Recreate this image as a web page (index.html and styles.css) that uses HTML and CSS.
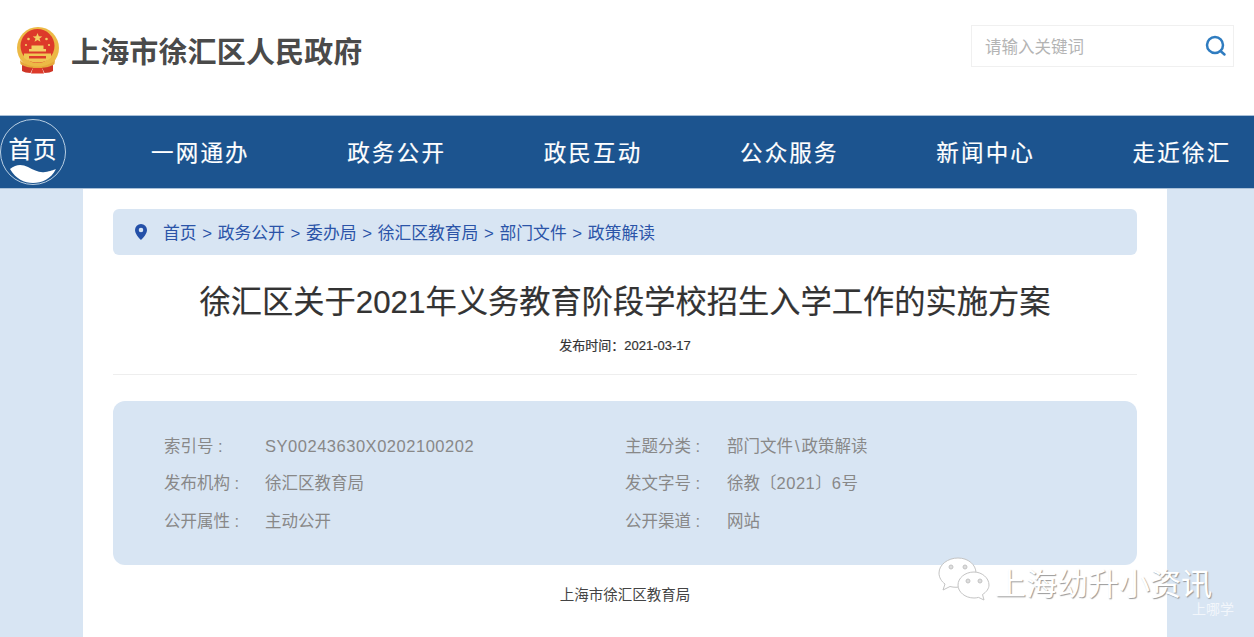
FILE: index.html
```html
<!DOCTYPE html>
<html lang="zh-CN">
<head>
  <meta charset="UTF-8" />
  <meta name="viewport" content="width=device-width, initial-scale=1" />
  <title>上海市徐汇区人民政府</title>
  <link rel="stylesheet" href="styles.css">
</head>
<body>

  <header class="top">
    <div class="brand">
      <svg class="emblem" width="44" height="47" viewBox="0 0 44 47">
        <circle cx="22" cy="21" r="21" fill="#ecb945"/>
        <circle cx="21.500" cy="19" r="17" fill="#dd3a2a"/>
        <path d="M21.500 6l1.300 3.300 3.500.1-2.800 2.100 1 3.300-3-1.900-3 1.900 1-3.300-2.800-2.100 3.500-.1z" fill="#f3cf62"/>
        <circle cx="12.500" cy="12" r="1.300" fill="#f3cf62"/><circle cx="30.500" cy="12" r="1.300" fill="#f3cf62"/>
        <circle cx="10" cy="18" r="1.100" fill="#f3cf62"/><circle cx="33" cy="18" r="1.100" fill="#f3cf62"/>
        <path d="M13 24.500h17v-2.500h-2.500v-3.500h-12V22H13z" fill="#f3cf62"/>
        <path d="M8 26.500h27v4c-3 3.500-8 5-13.500 5S11 34 8 30.500z" fill="#f0c653"/>
        <path d="M13 29h17v2.500H13z" fill="#dd3a2a"/>
        <path d="M4 33c4 4 10 6.500 17.500 6.500S35 37 39 33l-.5 4c-4 3.500-10 5-17 5s-13-1.500-17-5z" fill="#e6a93a"/>
        <path d="M6 38c3 1.600 7 2.500 11 2.800L14.500 46C11 46 8 45.300 6 44zM37 38c-3 1.600-7 2.500-11 2.800l2.500 5.200c3.500 0 6.500-.7 8.500-2z" fill="#cf3527"/>
        <path d="M17 41h9l2 5.500H15z" fill="#dd3a2a"/>
      </svg>
      <span class="site-name">上海市徐汇区人民政府</span>
    </div>
    <div class="search">
      <span class="search-hint">请输入关键词</span>
      <svg width="22" height="22" viewBox="0 0 22 22" fill="none" stroke="#2f7cc0" stroke-width="2.500" stroke-linecap="round">
        <circle cx="10" cy="10" r="8"/>
        <path d="M15.500 16l4 3.500"/>
      </svg>
    </div>
  </header>

  <nav class="nav">
    <a class="home">
      <span>首页</span>
      <svg class="home-wave" width="60" height="22" viewBox="0 0 60 22">
        <path d="M7 7c6-5 12-5 18-2s11 6 17 5 8-2 11-3C48 17 39 21 30 21S13 17 7 7z" fill="#fff"/>
      </svg>
    </a>
    <ul class="nav-items">
      <li>一网通办</li>
      <li>政务公开</li>
      <li>政民互动</li>
      <li>公众服务</li>
      <li>新闻中心</li>
      <li>走近徐汇</li>
    </ul>
  </nav>

  <main class="page">
    <div class="crumbs">
      <svg class="pin" width="12" height="16" viewBox="0 0 12 16">
        <path fill-rule="evenodd" d="M6 0a6 6 0 0 1 6 6c0 3.500-3.500 7.500-6 10C3.500 13.500 0 9.500 0 6a6 6 0 0 1 6-6zm0 3.700a2.300 2.300 0 1 0 0 4.600 2.300 2.300 0 0 0 0-4.600z" fill="#2450a8"/>
      </svg>
      <span>首页<i class="sep">&gt;</i>政务公开<i class="sep">&gt;</i>委办局<i class="sep">&gt;</i>徐汇区教育局<i class="sep">&gt;</i>部门文件<i class="sep">&gt;</i>政策解读</span>
    </div>

    <h1>徐汇区关于2021年义务教育阶段学校招生入学工作的实施方案</h1>
    <p class="date">发布时间：2021-03-17</p>

    <section class="info">
      <div class="info-row"><span class="key">索引号 :</span><span class="val latin">SY00243630X0202100202</span></div>
      <div class="info-row"><span class="key">主题分类 :</span><span class="val">部门文件<i class="slash">\</i>政策解读</span></div>
      <div class="info-row"><span class="key">发布机构 :</span><span class="val">徐汇区教育局</span></div>
      <div class="info-row"><span class="key">发文字号 :</span><span class="val">徐教〔<span class="latin">2021</span>〕<span class="latin">6</span>号</span></div>
      <div class="info-row"><span class="key">公开属性 :</span><span class="val">主动公开</span></div>
      <div class="info-row"><span class="key">公开渠道 :</span><span class="val">网站</span></div>
    </section>

    <p class="org">上海市徐汇区教育局</p>
  </main>

  <div class="mark">
    <svg width="52" height="44" viewBox="0 0 52 44" fill="#fff" stroke="#c4c4c4" stroke-width="1">
      <path d="M20 1C10 1 1 7.500 1 16c0 4.500 2.500 8.500 6 11l-2 6 7-3.500c2 .5 4 .8 6 .8C28 30 38 24 38 16 38 7.500 30 1 20 1z"/>
      <path d="M36 15c-9 0-16 6-16 13s7 13 16 13c1.500 0 3-.2 4.500-.6L46 43l-1.500-5.500C48.500 35 51 31.500 51 28c0-7-7-13-15-13z"/>
      <circle cx="13" cy="10" r="2" fill="#ddd"/><circle cx="27" cy="10" r="2" fill="#ddd"/>
      <circle cx="30" cy="24" r="2" fill="#ddd"/><circle cx="42" cy="24" r="2" fill="#ddd"/>
    </svg>
    <span class="mark-text">上海幼升小资讯</span>
    <span class="mark-sub">上哪学</span>
  </div>

</body>
</html>
```

FILE: styles.css
```css
body {
  margin: 0; height: 637px; overflow: hidden; position: relative;
  background: #d8e5f3; color: #333;
  font-family: "Liberation Sans", "Noto Sans CJK SC", sans-serif;
}
p, h1, ul { margin: 0; padding: 0; }
i { font-style: normal; }

.top {
  height: 115px; background: #fff; box-sizing: border-box;
  display: flex; justify-content: space-between; align-items: flex-start;
  padding: 25px 20px 0 16px;
}
.brand { display: flex; align-items: center; gap: 12px; margin-top: 2px; }
.site-name { font-size: 29px; font-weight: 700; color: #4a4a4a; letter-spacing: .15px; margin: -1px 0 0 -1px; }
.search {
  width: 263px; height: 42px; box-sizing: border-box; border: 1px solid #f0f0f0;
  display: flex; align-items: center; justify-content: space-between;
  padding: 0 6px 0 13px;
}
.search-hint { font-size: 16.500px; color: #b4b4b4; }

.nav {
  height: 74px; background: #1c548f; border-top: 1px solid #a9c0d8; border-bottom: 1px solid #a9c0d8;
  box-sizing: border-box; display: flex; align-items: center;
}
.home {
  width: 64px; height: 64px; border: 1px solid #b9cfe3; border-radius: 50%;
  position: relative; overflow: hidden; flex: none; color: #fff;
  font-size: 23.500px; line-height: 60px; text-align: center; letter-spacing: 1px;
  -webkit-text-stroke: .2px #fff;
}
.home-wave { position: absolute; left: 2px; bottom: 0; }
.nav-items {
  list-style: none; display: flex; margin: -3px 0 0 85px; gap: 97.500px;
  color: #fff; font-size: 22.500px; letter-spacing: 2.200px; white-space: nowrap;
  -webkit-text-stroke: .2px #fff;
}

.page {
  width: 1084px; height: 448px; margin: 0 auto; background: #fff;
  box-sizing: border-box; padding: 20px 30px 0;
  transform: translateX(-2px);
}
.crumbs {
  height: 46px; background: #d8e5f3; border-radius: 6px;
  display: flex; align-items: center; gap: 16px; padding-left: 22px;
  color: #2b54a8; font-size: 16.800px; white-space: nowrap;
}
.sep { margin: 0 5.700px; }
h1 {
  font-size: 31.250px; font-weight: 400; text-align: center; color: #333;
  margin-top: 26px; line-height: 44px; -webkit-text-stroke: .2px #333; white-space: nowrap;
}
.date {
  font-size: 13px; text-align: center; color: #333; margin-top: 12px; line-height: 18px;
  padding-bottom: 19px; border-bottom: 1px solid #eee;
  -webkit-text-stroke: .2px #333;
}
.info {
  margin-top: 26px; height: 164px; background: #d8e5f3; border-radius: 12px;
  box-sizing: border-box; padding: 25px 51px 0;
  display: grid; grid-template-columns: 461px 1fr; grid-auto-rows: 37.500px;
  color: #888; font-size: 16.500px; align-items: center;
}
.info-row { display: flex; align-items: baseline; }
.key { width: 101px; flex: none; }
.info-row:nth-child(even) .key { width: 102px; }
.latin { letter-spacing: .52px; }
.slash { margin: 0 2px; }
.org { font-size: 14.500px; text-align: center; color: #444; margin-top: 20px; line-height: 20px; }

.mark { position: absolute; left: 938px; top: 557px; width: 316px; height: 80px; }
.mark svg { position: absolute; left: 0; top: 0; }
.mark-text {
  position: absolute; left: 57px; top: 2px; font-size: 31px; color: #fff; white-space: nowrap;
  text-shadow: 1px 1px 1px #999;
}
.mark-sub { position: absolute; left: 254px; top: 41px; font-size: 14px; color: #f2f6fb; }
```
